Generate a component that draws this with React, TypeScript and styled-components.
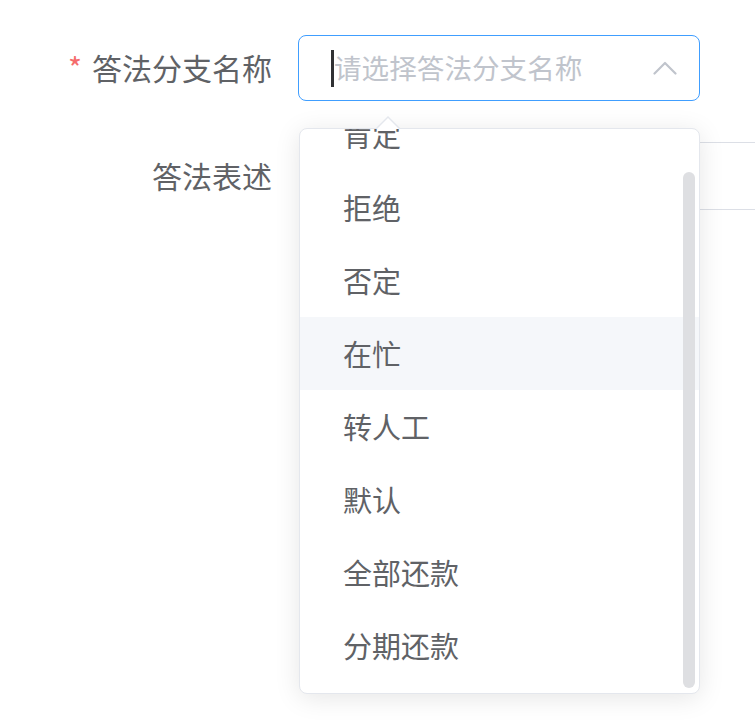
import React from "react";
import styled, { createGlobalStyle } from "styled-components";

const GlobalStyle = createGlobalStyle`
  html, body {
    margin: 0;
    padding: 0;
    background: #ffffff;
  }
  body {
    font-family: "Noto Sans CJK SC", "Noto Sans", "Liberation Sans", sans-serif;
  }
`;

const SPage = styled.div`
  width: 755px;
  height: 720px;
  overflow: hidden;
  padding-top: 35px;
  box-sizing: border-box;
`;

const SForm = styled.div`
  display: flex;
  flex-direction: column;
  gap: 41px;
`;

const SFormItem = styled.div`
  display: flex;
  align-items: center;
  position: relative;
`;

const SLabel = styled.label<{ $required?: boolean }>`
  width: 298px;
  box-sizing: border-box;
  padding-right: 26px;
  text-align: right;
  font-size: 30px;
  color: #606266;
  flex-shrink: 0;
  line-height: 1;
  margin-top: -3px;

  &::before {
    content: ${({ $required }) => ($required ? '"*"' : '""')};
    color: #f56c6c;
    margin-right: 10px;
  }
`;

const SSelect = styled.div`
  position: relative;
  width: 402px;
  height: 66px;
  box-sizing: border-box;
  border: 1.5px solid #409eff;
  border-radius: 8px;
  display: flex;
  align-items: center;
  padding: 0 22px 0 32px;
`;

const SCaret = styled.span`
  width: 3px;
  height: 37px;
  background: #303133;
  flex-shrink: 0;
`;

const SPlaceholder = styled.span`
  flex: 1;
  font-size: 27.6px;
  color: #c0c4cc;
  line-height: 1;
`;

const STextInput = styled.div`
  width: 470px;
  height: 68px;
  margin-left: 1px;
  box-sizing: border-box;
  border: 1.5px solid #dcdfe6;
  border-right: none;
  border-radius: 8px 0 0 8px;
  flex-shrink: 0;
`;

const SDropdown = styled.div`
  position: absolute;
  left: 299px;
  top: 93px;
  width: 401px;
  height: 566px;
  box-sizing: border-box;
  background: #ffffff;
  border: 1.5px solid #e4e7ed;
  border-radius: 8px;
  box-shadow: 0 4px 26px 0 rgba(0, 0, 0, 0.1);
  z-index: 10;
`;

const SPopperArrow = styled.div`
  position: absolute;
  top: -13px;
  left: 75px;
  width: 0;
  height: 0;
  border-left: 13px solid transparent;
  border-right: 13px solid transparent;
  border-bottom: 13px solid #e4e7ed;

  &::after {
    content: "";
    position: absolute;
    left: -12px;
    top: 1.5px;
    border-left: 12px solid transparent;
    border-right: 12px solid transparent;
    border-bottom: 12px solid #ffffff;
  }
`;

const SViewport = styled.div`
  position: relative;
  height: 100%;
  overflow: hidden;
  border-radius: 8px;
`;

const SList = styled.ul<{ $offset: number }>`
  list-style: none;
  margin: 0;
  padding: 13px 0;
  margin-top: ${({ $offset }) => -$offset}px;
`;

const SOption = styled.li<{ $hover?: boolean }>`
  height: 73px;
  display: flex;
  align-items: center;
  padding-left: 43px;
  font-size: 29px;
  color: #606266;
  background: ${({ $hover }) => ($hover ? "#f5f7fa" : "transparent")};
  line-height: 1;
`;

const SScrollThumb = styled.div`
  position: absolute;
  right: 4px;
  top: 43px;
  width: 12px;
  height: 516px;
  border-radius: 6px;
  background: #dedfe2;
`;

const options = ["肯定", "拒绝", "否定", "在忙", "转人工", "默认", "全部还款", "分期还款"];

export default function App() {
  return (
    <>
      <GlobalStyle />
      <SPage>
        <SForm>
          <SFormItem>
            <SLabel $required>答法分支名称</SLabel>
            <SSelect>
              <SCaret />
              <SPlaceholder>请选择答法分支名称</SPlaceholder>
              <svg width="24" height="14" viewBox="0 0 24 14" fill="none">
                <path d="M1.5 12.5 L12 2 L22.5 12.5" stroke="#c0c4cc" strokeWidth="2.2" strokeLinecap="round" strokeLinejoin="round" />
              </svg>
            </SSelect>
            <SDropdown>
              <SPopperArrow />
              <SViewport>
                <SList $offset={44}>
                  {options.map((o) => (
                    <SOption key={o} $hover={o === "在忙"}>
                      {o}
                    </SOption>
                  ))}
                </SList>
                <SScrollThumb />
              </SViewport>
            </SDropdown>
          </SFormItem>
          <SFormItem>
            <SLabel>答法表述</SLabel>
            <STextInput />
          </SFormItem>
        </SForm>
      </SPage>
    </>
  );
}
